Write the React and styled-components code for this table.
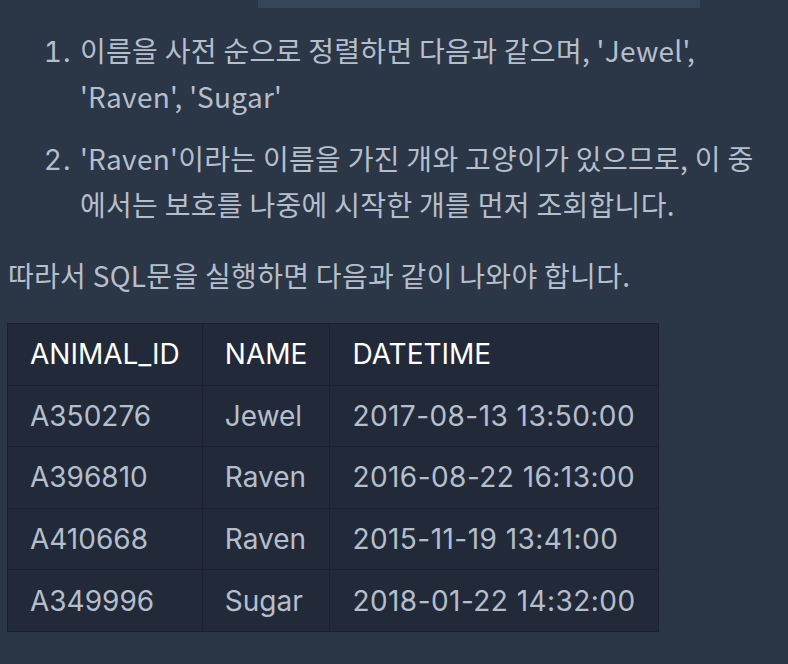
import styled, { createGlobalStyle } from "styled-components";

const Global = createGlobalStyle`
  html, body {
    margin: 0;
    padding: 0;
    background: #2b3647;
  }
  body {
    font-family: "Noto Sans CJK KR", "Noto Sans", sans-serif;
    color: #b5bfcc;
  }
`;

const Page = styled.div`
  padding: 0 14px 0 8px;
  min-height: 664px;
  box-sizing: border-box;
`;

const TopBar = styled.div`
  margin-left: 250px;
  width: 442px;
  height: 8px;
  background: #37455a;
`;

const Steps = styled.ol`
  margin: 19px 0 0;
  padding-left: 72px;
  font-size: 28px;
  line-height: 46px;
  letter-spacing: 0.3px;
`;

const Step = styled.li`
  &::marker {
    font-family: Inter, sans-serif;
    letter-spacing: 1px;
  }
  & + & {
    margin-top: 16px;
  }
`;

const Para = styled.p`
  margin: 25px 0 25px;
  font-size: 28px;
  line-height: 46px;
  letter-spacing: 0.3px;
`;

const Table = styled.table`
  border-collapse: collapse;
  background: #222a3a;
  border: 1px solid #1a2030;
  font-family: Inter, "Noto Sans", sans-serif;
  font-size: 28px;
  margin-left: -1px;
`;

const Cell = styled.td`
  height: 60.6px;
  padding: 0 22px;
  border: 1px solid #1a2030;
  color: ${(p) => (p.$head ? "#ffffff" : "#b5bfcc")};
  letter-spacing: ${(p) => (p.$wide ? "0.45px" : "0")};
  white-space: nowrap;
  text-align: left;
  font-weight: 400;
`;

const rows = [
  ["A350276", "Jewel", "2017-08-13 13:50:00"],
  ["A396810", "Raven", "2016-08-22 16:13:00"],
  ["A410668", "Raven", "2015-11-19 13:41:00"],
  ["A349996", "Sugar", "2018-01-22 14:32:00"],
];

const App = () => {
  return (
    <Page>
      <Global />
      <TopBar />
      <Steps>
        <Step>이름을 사전 순으로 정렬하면 다음과 같으며, 'Jewel', 'Raven', 'Sugar'</Step>
        <Step>'Raven'이라는 이름을 가진 개와 고양이가 있으므로, 이 중 에서는 보호를 나중에 시작한 개를 먼저 조회합니다.</Step>
      </Steps>
      <Para>따라서 SQL문을 실행하면 다음과 같이 나와야 합니다.</Para>
      <Table>
        <thead>
          <tr>
            <Cell as="th" $head>ANIMAL_ID</Cell>
            <Cell as="th" $head>NAME</Cell>
            <Cell as="th" $head>DATETIME</Cell>
          </tr>
        </thead>
        <tbody>
          {rows.map((r, i) => (
            <tr key={i}>
              {r.map((c, j) => (
                <Cell key={j} $wide={j === 2}>{c}</Cell>
              ))}
            </tr>
          ))}
        </tbody>
      </Table>
    </Page>
  );
};

export default App;
